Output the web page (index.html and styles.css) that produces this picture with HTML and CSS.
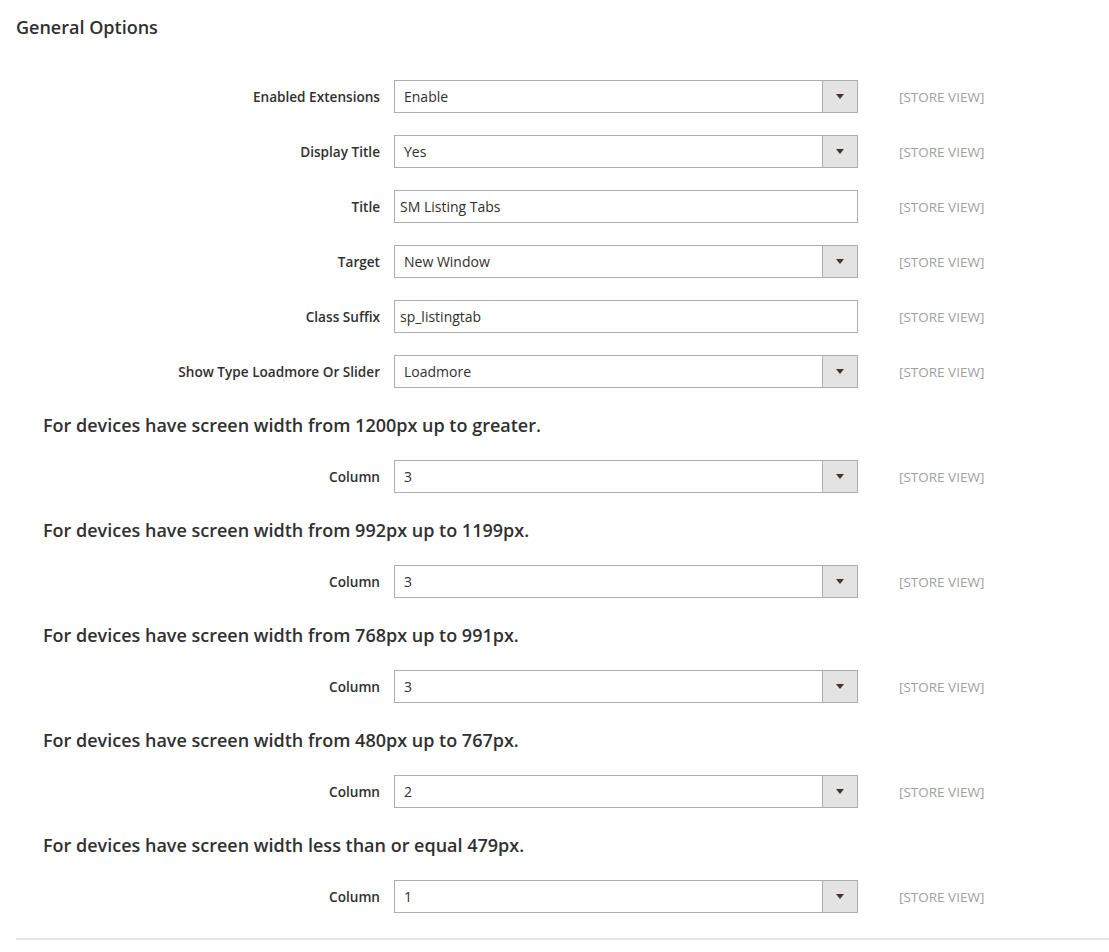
FILE: index.html
```html
<!DOCTYPE html>
<html lang="en">
<head>
    <meta charset="UTF-8">
    <meta name="viewport" content="width=device-width, initial-scale=1.0">
    <link rel="stylesheet" href="styles.css">
    <title>General Options</title>
</head>
<body>
    <div class="section">
        <h2 class="section-title">General Options</h2>
        <div class="fieldset">
            <div class="field-row">
                <label class="field-label">Enabled Extensions</label>
                <div class="control select-control">
                    <select><option>Enable</option><option>Disable</option></select>
                    <span class="select-button"><span class="arrow"></span></span>
                </div>
                <span class="scope">[STORE VIEW]</span>
            </div>
            <div class="field-row">
                <label class="field-label">Display Title</label>
                <div class="control select-control">
                    <select><option>Yes</option><option>No</option></select>
                    <span class="select-button"><span class="arrow"></span></span>
                </div>
                <span class="scope">[STORE VIEW]</span>
            </div>
            <div class="field-row">
                <label class="field-label">Title</label>
                <div class="control">
                    <input type="text" value="SM Listing Tabs">
                </div>
                <span class="scope">[STORE VIEW]</span>
            </div>
            <div class="field-row">
                <label class="field-label">Target</label>
                <div class="control select-control">
                    <select><option>New Window</option><option>Same Window</option></select>
                    <span class="select-button"><span class="arrow"></span></span>
                </div>
                <span class="scope">[STORE VIEW]</span>
            </div>
            <div class="field-row">
                <label class="field-label">Class Suffix</label>
                <div class="control">
                    <input type="text" value="sp_listingtab">
                </div>
                <span class="scope">[STORE VIEW]</span>
            </div>
            <div class="field-row">
                <label class="field-label">Show Type Loadmore Or Slider</label>
                <div class="control select-control">
                    <select><option>Loadmore</option><option>Slider</option></select>
                    <span class="select-button"><span class="arrow"></span></span>
                </div>
                <span class="scope">[STORE VIEW]</span>
            </div>

            <h3 class="group-title">For devices have screen width from 1200px up to greater.</h3>
            <div class="field-row">
                <label class="field-label">Column</label>
                <div class="control select-control">
                    <select><option>3</option></select>
                    <span class="select-button"><span class="arrow"></span></span>
                </div>
                <span class="scope">[STORE VIEW]</span>
            </div>

            <h3 class="group-title">For devices have screen width from 992px up to 1199px.</h3>
            <div class="field-row">
                <label class="field-label">Column</label>
                <div class="control select-control">
                    <select><option>3</option></select>
                    <span class="select-button"><span class="arrow"></span></span>
                </div>
                <span class="scope">[STORE VIEW]</span>
            </div>

            <h3 class="group-title">For devices have screen width from 768px up to 991px.</h3>
            <div class="field-row">
                <label class="field-label">Column</label>
                <div class="control select-control">
                    <select><option>3</option></select>
                    <span class="select-button"><span class="arrow"></span></span>
                </div>
                <span class="scope">[STORE VIEW]</span>
            </div>

            <h3 class="group-title">For devices have screen width from 480px up to 767px.</h3>
            <div class="field-row">
                <label class="field-label">Column</label>
                <div class="control select-control">
                    <select><option>2</option></select>
                    <span class="select-button"><span class="arrow"></span></span>
                </div>
                <span class="scope">[STORE VIEW]</span>
            </div>

            <h3 class="group-title">For devices have screen width less than or equal 479px.</h3>
            <div class="field-row">
                <label class="field-label">Column</label>
                <div class="control select-control">
                    <select><option>1</option></select>
                    <span class="select-button"><span class="arrow"></span></span>
                </div>
                <span class="scope">[STORE VIEW]</span>
            </div>
        </div>
    </div>
</body>
</html>
```

FILE: styles.css
```css
body {
    margin: 0;
    background: #fff;
    font-family: "Open Sans", Arial, sans-serif;
    color: #303030;
}

.section {
    padding: 16px 0 0 16px;
}

.section-title {
    margin: 0;
    font-size: 18px;
    line-height: 22px;
    font-weight: 600;
    color: #303030;
}

.fieldset {
    margin-top: 42px;
    padding-bottom: 25px;
    border-bottom: 2px solid #e3e3e3;
}

.field-row {
    display: flex;
    align-items: center;
    height: 33px;
    margin-bottom: 22px;
}

.field-row:last-child {
    margin-bottom: 0;
}

.field-label {
    width: 378px;
    padding-right: 14px;
    box-sizing: border-box;
    text-align: right;
    font-size: 13.6px;
    font-weight: 600;
    color: #303030;
}

.control {
    display: flex;
    width: 464px;
    height: 33px;
    box-sizing: border-box;
    border: 1px solid #adadad;
    background: #fff;
}

.control select,
.control input {
    flex: 1;
    min-width: 0;
    height: 100%;
    border: none;
    outline: none;
    background: transparent;
    font-family: "Open Sans", Arial, sans-serif;
    font-size: 14px;
    color: #303030;
    -webkit-appearance: none;
    appearance: none;
    margin: 0;
}

.control select {
    padding: 0 0 0 9px;
}

.control input {
    padding: 0 0 0 5px;
}

.select-button {
    width: 34px;
    border-left: 1px solid #adadad;
    background: #e3e3e3;
    display: flex;
    align-items: center;
    justify-content: center;
}

.arrow {
    width: 0;
    height: 0;
    border-left: 4px solid transparent;
    border-right: 4px solid transparent;
    border-top: 5px solid #41362f;
}

.scope {
    margin-left: 41px;
    font-size: 13.5px;
    color: #a0a0a0;
    text-transform: uppercase;
}

.group-title {
    margin: 26px 0 24px 27px;
    font-size: 18px;
    line-height: 22px;
    font-weight: 600;
    color: #303030;
}
```
